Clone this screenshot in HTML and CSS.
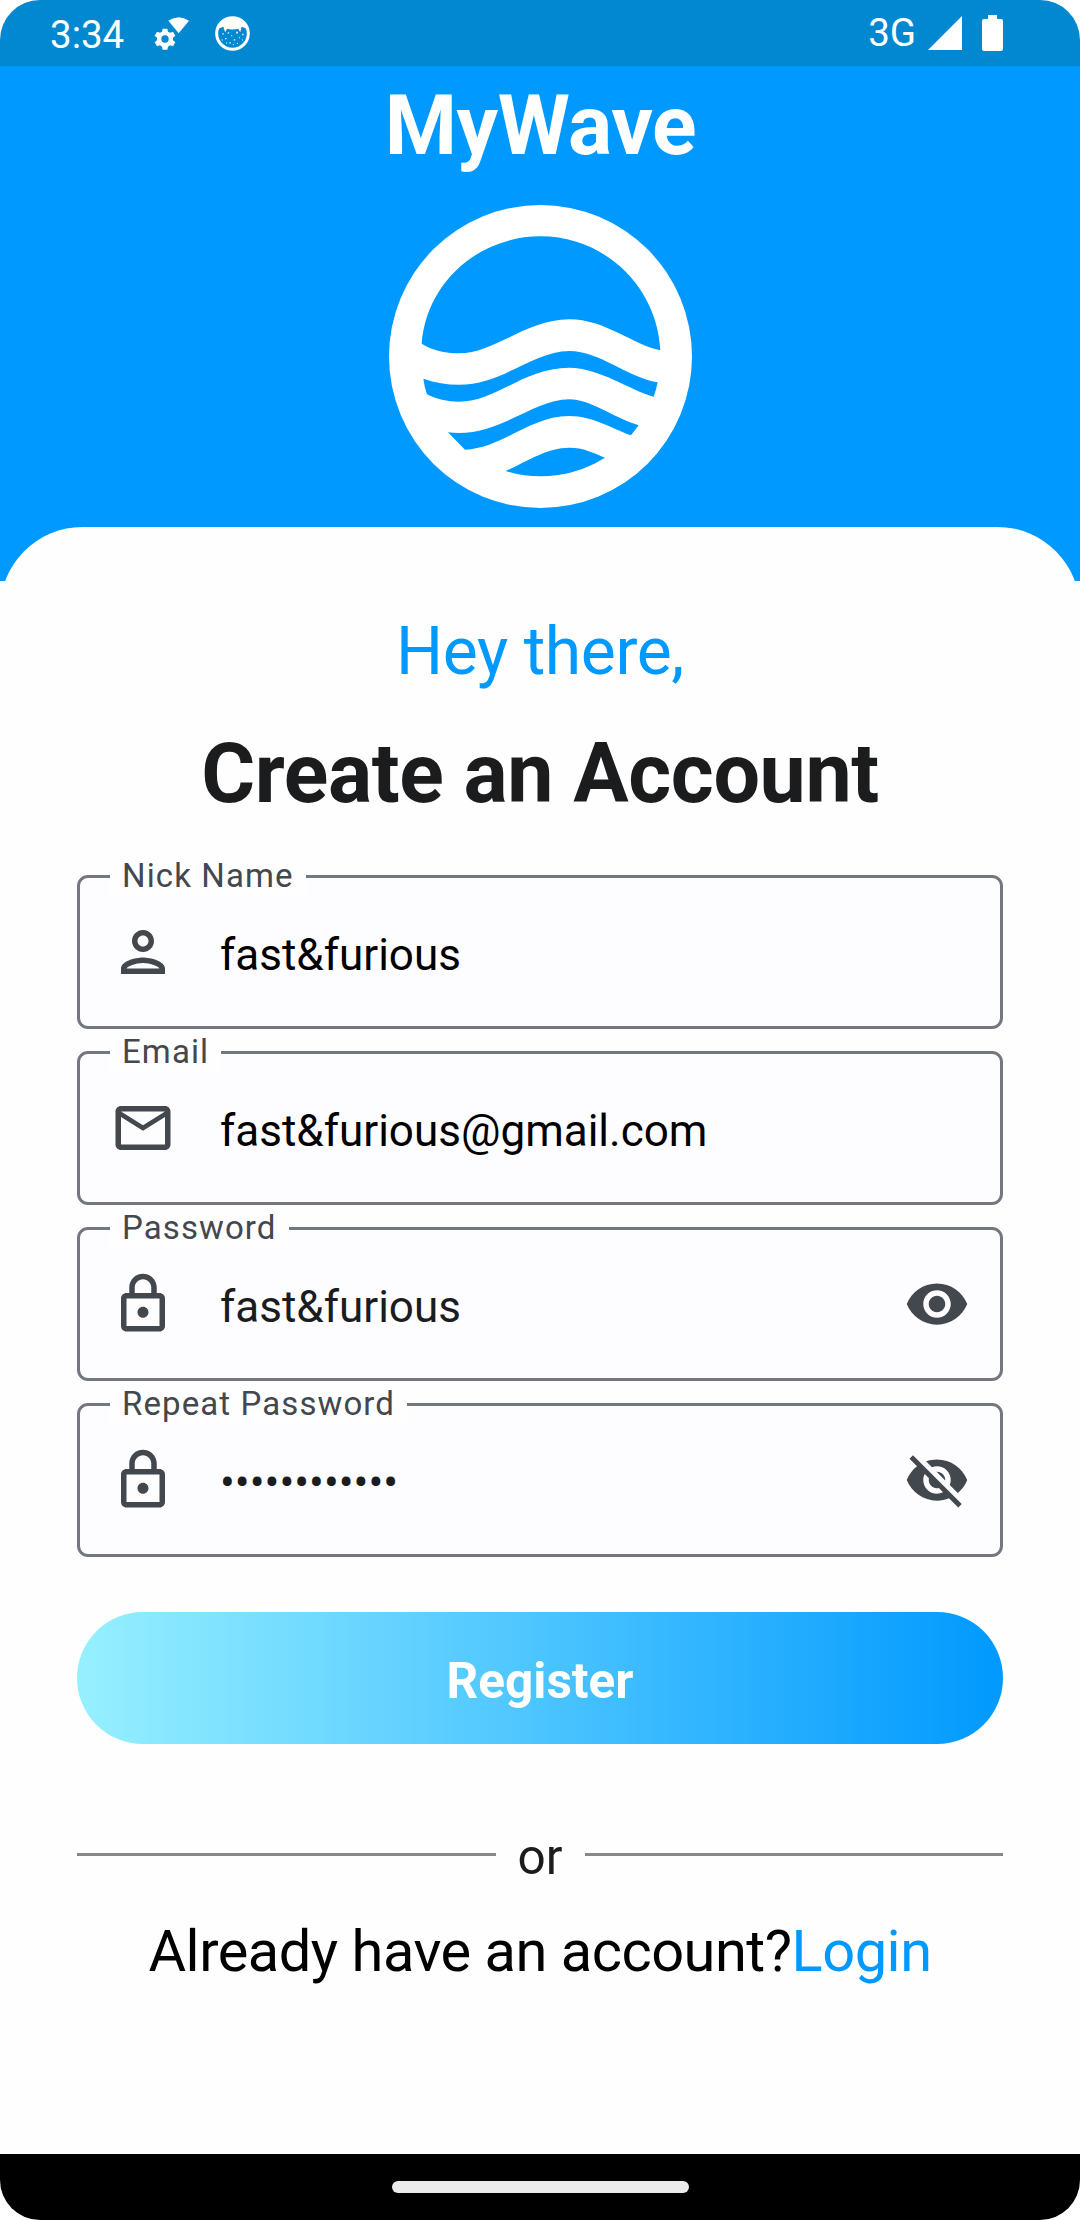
FILE: index.html
```html
<!DOCTYPE html>
<html lang="en">
<head>
<meta charset="utf-8">
<title>MyWave</title>
<link rel="stylesheet" href="styles.css">
</head>
<body>
<div class="phone">
  <div class="status">
    <span class="time">3:34</span>
    <svg class="gear" viewBox="460 48 108 105">
      <path fill="#fff" d="M503 62Q534 41 565 62L534 100Z"/>
      <path fill="#fff" fill-rule="evenodd" d="M486 86h14l2 9 6 3 9-3 7 12-7 6v8l7 6-7 12-9-3-6 4-2 9h-14l-2-9-6-4-9 3-7-12 7-6v-8l-7-6 7-12 9 3 6-3zM493 106a11 11 0 1 0 0 22 11 11 0 1 0 0-22z"/>
    </svg>
    <svg class="cat" viewBox="645 48 104 104">
      <circle cx="697" cy="100" r="47" fill="none" stroke="#fff" stroke-width="9"/>
      <path fill="#fff" d="M655 86Q668 54 697 53Q726 54 739 86L724 80 720 96 714 86Q697 90 681 86L675 96 670 80Z"/>
      <path fill="#fff" d="M667 99h4v4h-4zM683 96h4v4h-4zM708 95h5v5h-5zM726 101h4v4h-4zM693 105h3v3h-3zM675 113h4v4h-4zM701 117h4v4h-4zM716 111h3v3h-3zM688 126h4v4h-4zM710 128h3v3h-3zM665 118h3v3h-3zM725 118h3v3h-3zM698 132h3v3h-3zM678 127h3v3h-3z"/>
    </svg>
    <span class="network">3G</span>
    <svg class="signal" viewBox="0 0 34 34"><path fill="#fff" d="M0 34H34V0Z"/></svg>
    <svg class="battery" viewBox="0 0 21 36"><path fill="#fff" d="M6 4V0h9v4h4q2 0 2 2v28q0 2-2 2H2q-2 0-2-2V6q0-2 2-2z"/></svg>
  </div>

  <header class="header">
    <h1 class="brand">MyWave</h1>
    <svg class="logo" viewBox="57 405 909 909">
      <circle cx="511.500" cy="859.500" r="454.500" fill="#fff"/>
      <g fill="#0099ff">
        <path d="M155 821C169 640 323 499 512 499C704 499 862 650 871 841C790 825 705 748 598 748C470 748 372 850 267 850C225 850 185 840 155 821Z"/>
        <path d="M160 926C195 938 230 944 267 944C398 944 490 843 598 843C690 843 770 922 863 937Q859 959 851 980C775 958 690 894 598 893C460 893 380 995 267 995C232 995 200 988 171 973Q163 950 160 926Z"/>
        <path d="M234 1087Q250 1089 267 1089C398 1089 495 988 598 988C660 988 725 1040 806 1066L783 1096C730 1078 670 1038 598 1038C480 1038 400 1133 285 1139Z"/>
        <path d="M407 1203C470 1175 530 1133 598 1133C640 1133 670 1148 705 1163A360 360 0 0 1 407 1203Z"/>
      </g>
    </svg>
  </header>

  <main class="card">
    <p class="hello">Hey there,</p>
    <h2 class="title">Create an Account</h2>
    <div class="fields">
      <div class="field">
        <span class="label">Nick Name</span>
        <svg class="icon" viewBox="0 0 24 24"><path d="M12 6c1.100 0 2 .9 2 2s-.9 2-2 2-2-.9-2-2 .9-2 2-2m0 10c2.700 0 5.800 1.290 6 2H6c.23-.72 3.310-2 6-2m0-12C9.790 4 8 5.790 8 8s1.790 4 4 4 4-1.790 4-4-1.790-4-4-4zm0 10c-2.670 0-8 1.340-8 4v2h16v-2c0-2.660-5.330-4-8-4z"/></svg>
        <span class="value">fast&amp;furious</span>
      </div>
      <div class="field">
        <span class="label">Email</span>
        <svg class="icon" viewBox="0 0 24 24"><path d="M22 6c0-1.100-.9-2-2-2H4c-1.100 0-2 .9-2 2v12c0 1.100.9 2 2 2h16c1.100 0 2-.9 2-2V6zm-2 0l-8 5-8-5h16zm0 12H4V8l8 5 8-5v10z"/></svg>
        <span class="value">fast&amp;furious@gmail.com</span>
      </div>
      <div class="field">
        <span class="label">Password</span>
        <svg class="icon" viewBox="0 0 24 24"><path d="M18 8h-1V6c0-2.760-2.240-5-5-5S7 3.240 7 6v2H6c-1.100 0-2 .9-2 2v10c0 1.100.9 2 2 2h12c1.100 0 2-.9 2-2V10c0-1.100-.9-2-2-2zM9 6c0-1.660 1.340-3 3-3s3 1.340 3 3v2H9V6zm9 14H6V10h12v10zm-6-3c1.100 0 2-.9 2-2s-.9-2-2-2-2 .9-2 2 .9 2 2 2z"/></svg>
        <span class="value secret">fast&amp;furious</span>
        <svg class="icon" viewBox="0 0 24 24"><path d="M12 4.500C7 4.500 2.730 7.610 1 12c1.730 4.390 6 7.500 11 7.500s9.270-3.110 11-7.500c-1.730-4.390-6-7.500-11-7.500zM12 17c-2.760 0-5-2.240-5-5s2.240-5 5-5 5 2.240 5 5-2.240 5-5 5zm0-8c-1.660 0-3 1.340-3 3s1.340 3 3 3 3-1.340 3-3-1.340-3-3-3z"/></svg>
      </div>
      <div class="field">
        <span class="label">Repeat Password</span>
        <svg class="icon" viewBox="0 0 24 24"><path d="M18 8h-1V6c0-2.760-2.240-5-5-5S7 3.240 7 6v2H6c-1.100 0-2 .9-2 2v10c0 1.100.9 2 2 2h12c1.100 0 2-.9 2-2V10c0-1.100-.9-2-2-2zM9 6c0-1.660 1.340-3 3-3s3 1.340 3 3v2H9V6zm9 14H6V10h12v10zm-6-3c1.100 0 2-.9 2-2s-.9-2-2-2-2 .9-2 2 .9 2 2 2z"/></svg>
        <span class="value secret">••••••••••••</span>
        <svg class="icon" viewBox="0 0 24 24"><path d="M12 7c2.760 0 5 2.240 5 5 0 .65-.13 1.260-.36 1.830l2.920 2.920c1.510-1.260 2.700-2.890 3.430-4.750-1.730-4.390-6-7.500-11-7.500-1.400 0-2.740.25-3.980.7l2.160 2.160C10.740 7.130 11.350 7 12 7zM2 4.270l2.280 2.280.46.46C3.080 8.300 1.780 10.020 1 12c1.730 4.390 6 7.500 11 7.500 1.550 0 3.030-.3 4.380-.84l.42.42L19.730 22 21 20.730 3.270 3 2 4.270zM7.530 9.800l1.550 1.550c-.05.21-.08.43-.08.65 0 1.660 1.340 3 3 3 .22 0 .44-.03.65-.08l1.550 1.550c-.67.33-1.410.53-2.200.53-2.760 0-5-2.240-5-5 0-.79.2-1.530.53-2.200zm4.310-.78l3.150 3.150.02-.16c0-1.660-1.340-3-3-3l-.17.010z"/></svg>
      </div>
    </div>
    <button class="register" type="button">Register</button>
    <div class="divider"><span class="or">or</span></div>
    <p class="signin">Already have an account?<a class="login">Login</a></p>
  </main>

  <div class="navbar"><div class="pill"></div></div>
</div>
</body>
</html>
```
FILE: styles.css
```css
* { box-sizing: border-box; }
body {
  margin: 0;
  background: #fff;
  font-family: Roboto, "Noto Sans", sans-serif;
  color: #1a1c1e;
}
h1, h2, p { margin: 0; }
svg { display: block; flex: none; }

.phone {
  width: 1080px;
  height: 2220px;
  display: flex;
  flex-direction: column;
  overflow: hidden;
  border-radius: 40px;
  background: #fefefe;
}

.status {
  height: 66px;
  flex: none;
  display: flex;
  align-items: flex-start;
  padding: 0 77px 0 50px;
  background: #0288d1;
  color: #fff;
  font-size: 38.5px;
}
.time { line-height: 46px; margin-top: 12px; width: 104px; }
.gear { width: 36px; height: 35px; margin-top: 16px; }
.cat { width: 35px; height: 35px; margin: 16px auto 0 25px; }
.network { line-height: 46px; margin-top: 10px; }
.signal { width: 34px; height: 34px; margin: 16px 0 0 12px; }
.battery { width: 21px; height: 36px; margin: 15px 0 0 20px; }

.header {
  height: 515px;
  flex: none;
  display: flex;
  flex-direction: column;
  align-items: center;
  gap: 31px;
  padding-top: 11px;
  background: #0099ff;
}
.brand {
  color: #fff;
  font-size: 82.5px;
  line-height: 97px;
  font-weight: 700;
  letter-spacing: -0.4px;
  padding-left: 1px;
}
.logo { width: 303px; height: 303px; margin-left: 1px; }

.card {
  flex: 1;
  position: relative;
  display: flex;
  flex-direction: column;
  margin-top: -54px;
  padding: 86px 77px 0;
  border-radius: 82.5px 82.5px 0 0;
  background: #fefefe;
}
.hello {
  color: #0099ff;
  font-size: 66px;
  line-height: 78px;
  letter-spacing: -0.4px;
  text-align: center;
}
.title {
  margin-top: 34px;
  font-size: 82.5px;
  line-height: 97px;
  font-weight: 700;
  letter-spacing: -0.4px;
  text-align: center;
}

.fields {
  display: flex;
  flex-direction: column;
  gap: 22px;
  margin-top: 53px;
}
.field {
  position: relative;
  height: 154px;
  display: flex;
  align-items: center;
  padding: 0 30px;
  border: 3px solid #73777f;
  border-radius: 11px;
  background: #fdfcff;
}
.label {
  position: absolute;
  left: 30px;
  top: -24px;
  padding: 0 12px;
  background: #fefefe;
  color: #43474e;
  font-size: 33px;
  line-height: 44px;
  letter-spacing: 1.1px;
}
.icon { width: 66px; height: 66px; fill: #43474e; }
.value {
  flex: 1;
  margin-left: 44px;
  padding-top: 6px;
  color: #000;
  font-size: 44px;
  line-height: 52px;
}
.secret { color: #1a1c1e; }

.register {
  height: 132px;
  margin-top: 55px;
  padding: 6px 0 0;
  border: 0;
  border-radius: 66px;
  background: linear-gradient(90deg, #97f0ff, #0099ff);
  color: #fff;
  font: 700 49.5px/58px Roboto, sans-serif;
}
.divider {
  height: 61px;
  display: flex;
  align-items: center;
  gap: 22px;
  margin-top: 80px;
}
.divider::before, .divider::after {
  content: "";
  flex: 1;
  height: 3px;
  background: #888;
}
.or { padding-top: 6px; font-size: 49.5px; line-height: 57px; }
.signin {
  margin-top: 32px;
  color: #000;
  font-size: 57.75px;
  line-height: 68px;
  letter-spacing: -0.48px;
  text-align: center;
  white-space: nowrap;
}
.login { color: #0099ff; }

.navbar {
  height: 66px;
  flex: none;
  display: flex;
  justify-content: center;
  padding-top: 27px;
  background: #000;
}
.pill { width: 297px; height: 12px; border-radius: 6px; background: #ebebeb; }
```
